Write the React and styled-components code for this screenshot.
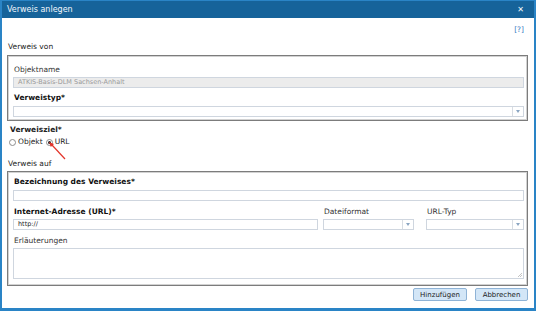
import React from 'react';
import styled, { createGlobalStyle } from 'styled-components';

const Global = createGlobalStyle`
  html, body { margin: 0; padding: 0; background: #fff; }
  body { font-family: "DejaVu Sans", Verdana, sans-serif; }
`;

const Dialog = styled.div`
  position: relative;
  width: 536px;
  height: 311px;
  box-sizing: border-box;
  border: 2px solid #2a84c6;
  border-top: 1px solid #2a84c6;
  border-bottom: 3px solid #2a84c6;
  background: #fff;
  display: flex;
  flex-direction: column;
  font-size: 7.5px;
  line-height: 10px;
  color: #222;
`;

const TitleBar = styled.div`
  height: 17px;
  background: #16639a;
  color: #f2f6fa;
  display: flex;
  align-items: center;
  justify-content: space-between;
  padding: 0 10px 0 5px;
  font-size: 8px;
`;

const Close = styled.span`
  font-weight: bold;
  font-size: 8px;
`;

const Body = styled.div`
  flex: 1;
  display: flex;
  flex-direction: column;
  padding: 7px 6px 0 5px;
`;

const Help = styled.div`
  align-self: flex-end;
  color: #3a7bbf;
  margin-right: 4px;
`;

const Caption = styled.div`
  margin-top: ${p => p.$top}px;
  padding-left: ${p => p.$left || 1}px;
  font-weight: ${p => (p.$bold ? 'bold' : 'normal')};
`;

const Fieldset = styled.div`
  margin-top: ${p => p.$top}px;
  border: 1px solid #7c7c7c;
  box-shadow: inset 0 0 0 1px #d2d2d2;
  padding: ${p => p.$pt}px 3px ${p => p.$pb}px 5px;
  display: flex;
  flex-direction: column;
`;

const Label = styled.div`
  margin-top: ${p => p.$top || 0}px;
  padding-left: 1px;
  font-weight: ${p => (p.$bold ? 'bold' : 'normal')};
  color: ${p => (p.$bold ? '#111' : '#333')};
`;

const Input = styled.div`
  margin-top: ${p => p.$top || 0}px;
  height: ${p => p.$h || 11}px;
  box-sizing: border-box;
  border: 1px solid #cfd6df;
  background: ${p => (p.$disabled ? '#ececec' : '#fff')};
  color: ${p => (p.$disabled ? '#9a9a9a' : '#222')};
  font-size: 6.5px;
  line-height: 9px;
  padding: 0 4px;
  display: flex;
  align-items: center;
  position: relative;
`;

const SelectBox = styled(Input)`
  padding: 0;
  justify-content: flex-end;
  align-items: stretch;
`;

const Arrow = styled.div`
  width: 10px;
  border-left: 1px solid #d8dde3;
  display: flex;
  align-items: center;
  justify-content: center;
  &::after {
    content: '';
    border-left: 2.5px solid transparent;
    border-right: 2.5px solid transparent;
    border-top: 3px solid #8ba6c2;
  }
`;

const Select = ({ top }) => (
  <SelectBox $top={top}>
    <Arrow />
  </SelectBox>
);

const RadioRow = styled.div`
  margin-top: 2px;
  display: flex;
  align-items: center;
  padding-left: 2px;
  color: #222;
`;

const Radio = styled.span`
  width: 7px;
  height: 7px;
  box-sizing: border-box;
  border-radius: 50%;
  border: 1px solid #8d8d8d;
  background: #fff;
  margin-right: 2px;
  margin-left: ${p => p.$gap || 0}px;
  display: inline-flex;
  align-items: center;
  justify-content: center;
  &::after {
    content: '';
    width: 3px;
    height: 3px;
    border-radius: 50%;
    background: ${p => (p.$checked ? '#222' : 'transparent')};
  }
`;

const Grid = styled.div`
  display: grid;
  grid-template-columns: 305px 96px 1fr;
  & > :nth-child(3n + 2) { margin-left: 5px; }
  & > :nth-child(3n) { margin-left: 12px; }
`;

const TextArea = styled(Input)`
  align-items: flex-end;
  justify-content: flex-end;
  padding: 0 1px 1px 0;
`;

const Buttons = styled.div`
  margin-top: 2px;
  display: flex;
  justify-content: flex-end;
  gap: 8px;
`;

const Button = styled.div`
  width: ${p => p.$w}px;
  height: 13px;
  box-sizing: border-box;
  border: 1px solid #8fb3d6;
  border-radius: 2px;
  background: #d3e6f7;
  color: #222;
  font-size: 7px;
  display: flex;
  align-items: center;
  justify-content: center;
`;

const Pointer = styled.svg`
  position: absolute;
  left: 44px;
  top: 139px;
  pointer-events: none;
`;

export default function App() {
  return (
    <>
      <Global />
      <Dialog>
        <TitleBar>
          <span>Verweis anlegen</span>
          <Close>✕</Close>
        </TitleBar>
        <Body>
          <Help>[?]</Help>
          <Caption $top={7}>Verweis von</Caption>
          <Fieldset $top={3} $pt={9} $pb={3}>
            <Label>Objektname</Label>
            <Input $top={2} $disabled>ATKIS-Basis-DLM Sachsen-Anhalt</Input>
            <Label $top={5} $bold>Verweistyp*</Label>
            <Select top={3} />
          </Fieldset>
          <Caption $top={4} $left={3} $bold>Verweisziel*</Caption>
          <RadioRow>
            <Radio />
            Objekt
            <Radio $gap={3} $checked />
            URL
          </RadioRow>
          <Caption $top={12}>Verweis auf</Caption>
          <Fieldset $top={2} $pt={5} $pb={6}>
            <Label $bold>Bezeichnung des Verweises*</Label>
            <Input $top={3} />
            <Grid>
              <Label $top={6} $bold>Internet-Adresse (URL)*</Label>
              <Label $top={6}>Dateiformat</Label>
              <Label $top={6}>URL-Typ</Label>
              <Input $top={2}>http://</Input>
              <Select top={2} />
              <Select top={2} />
            </Grid>
            <Label $top={6}>Erläuterungen</Label>
            <TextArea $top={2} $h={31}>
              <svg width="5" height="5" viewBox="0 0 5 5">
                <path d="M1 5 L5 1 M3 5 L5 3" stroke="#aaa" strokeWidth="0.7" />
              </svg>
            </TextArea>
          </Fieldset>
          <Buttons>
            <Button $w={54}>Hinzufügen</Button>
            <Button $w={53}>Abbrechen</Button>
          </Buttons>
        </Body>
        <Pointer width="24" height="24" viewBox="0 0 24 24">
          <path d="M19 19 L6 5" stroke="#e3342a" strokeWidth="1.2" />
          <path d="M3 2 L4.8 7.1 L8 4.1 Z" fill="#e3342a" />
        </Pointer>
      </Dialog>
    </>
  );
}
